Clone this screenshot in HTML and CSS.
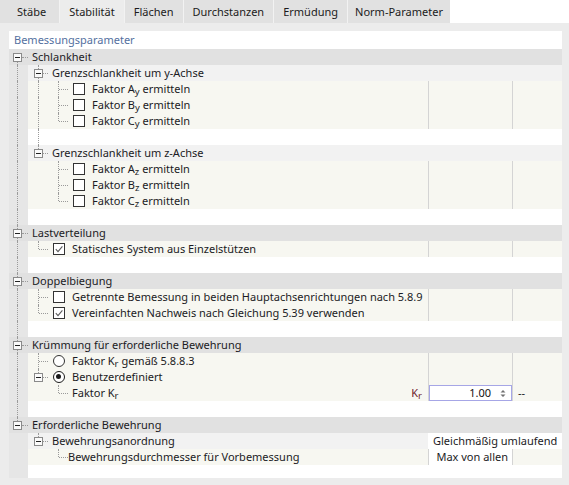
FILE: index.html
```html
<!DOCTYPE html>
<html lang="de">
<head>
<meta charset="UTF-8">
<title>Stabilität</title>
<link rel="stylesheet" href="styles.css">
</head>
<body>
<div class="tabs">
    <div class="tab">Stäbe</div>
    <div class="tab active">Stabilität</div>
    <div class="tab">Flächen</div>
    <div class="tab">Durchstanzen</div>
    <div class="tab">Ermüdung</div>
    <div class="tab">Norm-Parameter</div>
</div>

<div class="panel">
    <div class="head">Bemessungsparameter</div>

    <!-- Schlankheit -->
    <div class="row group">
        <span class="gut box down"><i></i></span>
        <span class="tree"><span class="txt">Schlankheit</span></span>
        <span class="c2"></span><span class="c3"></span>
    </div>
    <div class="row sub">
        <span class="gut v"></span>
        <span class="tree"><span class="ind box up down"><i></i></span><span class="txt">Grenzschlankheit um y-Achse</span></span>
        <span class="c2"></span><span class="c3"></span>
    </div>
    <div class="row leaf">
        <span class="gut v"></span>
        <span class="tree"><span class="ind v"></span><span class="ind t"></span><span class="chk"></span><span class="txt">Faktor A<sub>y</sub> ermitteln</span></span>
        <span class="c2"></span><span class="c3"></span>
    </div>
    <div class="row leaf">
        <span class="gut v"></span>
        <span class="tree"><span class="ind v"></span><span class="ind t"></span><span class="chk"></span><span class="txt">Faktor B<sub>y</sub> ermitteln</span></span>
        <span class="c2"></span><span class="c3"></span>
    </div>
    <div class="row leaf">
        <span class="gut v"></span>
        <span class="tree"><span class="ind v"></span><span class="ind l"></span><span class="chk"></span><span class="txt">Faktor C<sub>y</sub> ermitteln</span></span>
        <span class="c2"></span><span class="c3"></span>
    </div>
    <div class="row blank">
        <span class="gut v"></span>
        <span class="tree"><span class="ind v"></span></span>
        <span class="c2"></span><span class="c3"></span>
    </div>
    <div class="row sub">
        <span class="gut v"></span>
        <span class="tree"><span class="ind box up"><i></i></span><span class="txt">Grenzschlankheit um z-Achse</span></span>
        <span class="c2"></span><span class="c3"></span>
    </div>
    <div class="row leaf">
        <span class="gut v"></span>
        <span class="tree"><span class="ind"></span><span class="ind t"></span><span class="chk"></span><span class="txt">Faktor A<sub>z</sub> ermitteln</span></span>
        <span class="c2"></span><span class="c3"></span>
    </div>
    <div class="row leaf">
        <span class="gut v"></span>
        <span class="tree"><span class="ind"></span><span class="ind t"></span><span class="chk"></span><span class="txt">Faktor B<sub>z</sub> ermitteln</span></span>
        <span class="c2"></span><span class="c3"></span>
    </div>
    <div class="row leaf">
        <span class="gut v"></span>
        <span class="tree"><span class="ind"></span><span class="ind l"></span><span class="chk"></span><span class="txt">Faktor C<sub>z</sub> ermitteln</span></span>
        <span class="c2"></span><span class="c3"></span>
    </div>
    <div class="row blank">
        <span class="gut v"></span>
        <span class="tree"></span>
        <span class="c2"></span><span class="c3"></span>
    </div>

    <!-- Lastverteilung -->
    <div class="row group">
        <span class="gut box up down"><i></i></span>
        <span class="tree"><span class="txt">Lastverteilung</span></span>
        <span class="c2"></span><span class="c3"></span>
    </div>
    <div class="row leaf">
        <span class="gut v"></span>
        <span class="tree"><span class="ind l"></span><span class="chk on"><svg viewBox="0 0 10 10"><path d="M1.8 5.2 L4 7.6 L8.4 2.4"/></svg></span><span class="txt">Statisches System aus Einzelstützen</span></span>
        <span class="c2"></span><span class="c3"></span>
    </div>
    <div class="row blank">
        <span class="gut v"></span>
        <span class="tree"></span>
        <span class="c2"></span><span class="c3"></span>
    </div>

    <!-- Doppelbiegung -->
    <div class="row group">
        <span class="gut box up down"><i></i></span>
        <span class="tree"><span class="txt">Doppelbiegung</span></span>
        <span class="c2"></span><span class="c3"></span>
    </div>
    <div class="row leaf">
        <span class="gut v"></span>
        <span class="tree"><span class="ind t"></span><span class="chk"></span><span class="txt">Getrennte Bemessung in beiden Hauptachsenrichtungen nach 5.8.9</span></span>
        <span class="c2"></span><span class="c3"></span>
    </div>
    <div class="row leaf">
        <span class="gut v"></span>
        <span class="tree"><span class="ind l"></span><span class="chk on"><svg viewBox="0 0 10 10"><path d="M1.8 5.2 L4 7.6 L8.4 2.4"/></svg></span><span class="txt">Vereinfachten Nachweis nach Gleichung 5.39 verwenden</span></span>
        <span class="c2"></span><span class="c3"></span>
    </div>
    <div class="row blank">
        <span class="gut v"></span>
        <span class="tree"></span>
        <span class="c2"></span><span class="c3"></span>
    </div>

    <!-- Krümmung -->
    <div class="row group">
        <span class="gut box up down"><i></i></span>
        <span class="tree"><span class="txt">Krümmung für erforderliche Bewehrung</span></span>
        <span class="c2"></span><span class="c3"></span>
    </div>
    <div class="row leaf">
        <span class="gut v"></span>
        <span class="tree"><span class="ind t"></span><span class="radio"></span><span class="txt">Faktor K<sub>r</sub> gemäß 5.8.8.3</span></span>
        <span class="c2"></span><span class="c3"></span>
    </div>
    <div class="row leaf">
        <span class="gut v"></span>
        <span class="tree"><span class="ind box up"><i></i></span><span class="radio on"></span><span class="txt">Benutzerdefiniert</span></span>
        <span class="c2"></span><span class="c3"></span>
    </div>
    <div class="row leaf">
        <span class="gut v"></span>
        <span class="tree"><span class="ind"></span><span class="ind l"></span><span class="txt pad">Faktor K<sub>r</sub></span><span class="sym">K<sub>r</sub></span></span>
        <span class="c2"><span class="spin">1.00<svg viewBox="0 0 6 9"><path d="M0.5 3.5 L3 1 L5.5 3.5 Z M0.5 5.5 L3 8 L5.5 5.5 Z"/></svg></span></span>
        <span class="c3"><span class="unit">--</span></span>
    </div>
    <div class="row blank">
        <span class="gut v"></span>
        <span class="tree"></span>
        <span class="c2"></span><span class="c3"></span>
    </div>

    <!-- Erforderliche Bewehrung -->
    <div class="row group">
        <span class="gut box up"><i></i></span>
        <span class="tree"><span class="txt">Erforderliche Bewehrung</span></span>
        <span class="c2"></span><span class="c3"></span>
    </div>
    <div class="row sub">
        <span class="gut"></span>
        <span class="tree"><span class="ind box up"><i></i></span><span class="txt">Bewehrungsanordnung</span></span>
        <span class="c2 wide value">Gleichmäßig umlaufend</span>
    </div>
    <div class="row leaf">
        <span class="gut"></span>
        <span class="tree"><span class="ind"></span><span class="ind l"></span><span class="txt">Bewehrungsdurchmesser für Vorbemessung</span></span>
        <span class="c2 value right">Max von allen</span><span class="c3"></span>
    </div>
    <div class="filler">
        <span class="gut"></span>
    </div>
</div>
</body>
</html>
```

FILE: styles.css
```css
body {
    margin: 0;
    background: #ececec;
    font-family: "Noto Sans", "Open Sans", sans-serif;
    font-size: 11px;
    color: #1b1b24;
}

/* tab strip */
.tabs {
    display: flex;
    height: 23px;
    background: #fff;
}

.tab {
    padding: 0 9px;
    line-height: 23px;
    background: #e1e1e1;
    border-left: 1px solid #f2f2f2;
    color: #1b1b1b;
}

.tab:first-child {
    padding: 0 13px 0 17px;
    border-left: none;
}

.tab:last-child {
    padding: 0 7px;
}

.tab.active {
    background: #ececec;
}

/* main panel */
.panel {
    margin: 8px 7px 0 9px;
    background: #fff;
}

.head {
    height: 18px;
    line-height: 17px;
    padding-left: 5px;
    color: #5470a0;
}

.row {
    display: grid;
    grid-template-columns: 19px 1fr 84px 50px;
    height: 16px;
    line-height: 16px;
}

.row.group { background: #e1e1e1; }
.row.sub { background: #f2f2f2; }
.row.leaf { background: #f7f7f1; }
.row.blank { background: #fff; }

.gut {
    position: relative;
    background: #e6e6e6;
}

.group .gut { background: transparent; }

.tree {
    display: flex;
    align-items: center;
    white-space: nowrap;
    overflow: hidden;
}

.group .txt { margin-left: 4px; }
.sub .txt { margin-left: 4px; }
.txt.pad { margin-left: 4px; }

sub {
    font-size: 9.5px;
    line-height: 0;
    vertical-align: -2px;
}

.leaf .c2,
.leaf .c3 {
    border-left: 1px solid #d4d4d4;
}

.c2.wide {
    grid-column: span 2;
    border-left: none;
}

.value {
    background: #fff;
    padding-left: 5px;
    white-space: nowrap;
}

.value.right {
    text-align: right;
    padding: 0 4px 0 0;
}

/* tree lines */
.ind {
    position: relative;
    flex: none;
    width: 20px;
    height: 16px;
}

.v::before,
.t::before,
.l::before,
.box::before {
    content: "";
    position: absolute;
    left: 10px;
    border-left: 1px dotted #9a9a9a;
}

.gut.v::before,
.gut.box::before {
    left: 8px;
}

.v::before,
.t::before {
    top: 0;
    bottom: 0;
}

.l::before {
    top: 0;
    height: 8px;
}

.box.up::before { top: 0; height: 4px; }
.box.down::before { top: 12px; bottom: 0; }
.box.up.down::before { top: 0; bottom: 0; height: auto; }

.t::after,
.l::after,
.box::after {
    content: "";
    position: absolute;
    left: 11px;
    right: 0;
    top: 8px;
    border-top: 1px dotted #9a9a9a;
}

.box::after { left: 15px; }
.gut.box::after { left: 13px; }

.box i {
    position: absolute;
    left: 6px;
    top: 4px;
    width: 7px;
    height: 7px;
    border: 1px solid #8a8a8a;
    background: #fafafa;
    z-index: 1;
}

.gut.box i { left: 4px; }

.box i::after {
    content: "";
    position: absolute;
    left: 1px;
    right: 1px;
    top: 3px;
    height: 1px;
    background: #222;
}

/* check boxes and radios */
.chk {
    flex: none;
    width: 12px;
    height: 12px;
    box-sizing: border-box;
    border: 1px solid #333;
    background: #fff;
    margin: 0 7px 0 5px;
}

.chk svg {
    display: block;
    width: 10px;
    height: 10px;
    fill: none;
    stroke: #5a5a5a;
    stroke-width: 1.1;
}

.radio {
    flex: none;
    position: relative;
    width: 12px;
    height: 12px;
    box-sizing: border-box;
    border: 1px solid #333;
    border-radius: 50%;
    background: #fff;
    margin: 0 7px 0 5px;
}

.radio.on {
    border-width: 1.5px;
    border-color: #1a1a1a;
}

.radio.on::after {
    content: "";
    position: absolute;
    left: 2px;
    top: 2px;
    width: 5px;
    height: 5px;
    border-radius: 50%;
    background: #1a1a1a;
}

/* value editor */
.sym {
    margin-left: auto;
    padding-right: 6px;
    color: #6e1c2c;
}

.spin {
    display: flex;
    align-items: center;
    justify-content: flex-end;
    height: 16px;
    box-sizing: border-box;
    border: 1px solid #a6a6e6;
    background: #fff;
    padding-right: 5px;
    color: #111;
}

.spin svg {
    width: 6px;
    height: 9px;
    margin-left: 9px;
    fill: #707070;
}

.unit {
    padding-left: 5px;
}

.filler {
    display: grid;
    grid-template-columns: 19px 1fr;
    height: 13px;
}
```
